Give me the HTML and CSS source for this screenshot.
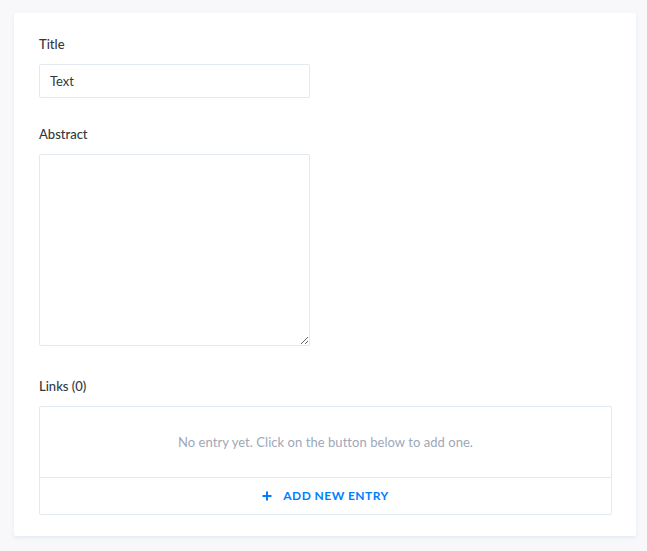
FILE: index.html
```html
<!DOCTYPE html>
<html>
<head>
<meta charset="utf-8">
<link rel="stylesheet" href="styles.css">
</head>
<body>
<div class="card">
  <div class="field">
    <label class="label">Title</label>
    <input class="input" type="text" value="Text">
  </div>
  <div class="field field-abstract">
    <label class="label">Abstract</label>
    <textarea class="textarea"></textarea>
  </div>
  <div class="field field-links">
    <label class="label">Links (0)</label>
    <div class="list">
      <div class="empty">No entry yet. Click on the button below to add one.</div>
      <button class="add">
        <svg class="plus" width="10" height="10" viewBox="0 0 10 10"><path d="M5 0.5V9.5M0.5 5H9.5" stroke="#007eff" stroke-width="2"/></svg>
        <span>ADD NEW ENTRY</span>
      </button>
    </div>
  </div>
</div>
</body>
</html>
```
FILE: styles.css
```css
html, body {
  margin: 0;
  padding: 0;
}
body {
  background: #f8f8fa;
  font-family: Lato, "Liberation Sans", sans-serif;
  font-size: 13px;
  color: #333740;
  padding: 13px 11px 16px 14px;
}
.card {
  background: #fff;
  border-radius: 2px;
  box-shadow: 0 2px 4px #e3e9f3;
  padding: 23px 24px 21px 25px;
  width: 573px;
}
.field {
  display: flex;
  flex-direction: column;
  align-items: flex-start;
}
.field-abstract {
  margin-top: 28px;
}
.field-links {
  margin-top: 32px;
  align-items: stretch;
}
.label {
  font-weight: 500;
  line-height: 16px;
  margin-bottom: 12px;
  color: #333740;
}
.input {
  box-sizing: border-box;
  width: 271px;
  height: 34px;
  border: 1px solid #e3e9f3;
  border-radius: 2px;
  padding: 0 10px;
  font-family: Lato, "Liberation Sans", sans-serif;
  font-size: 13px;
  color: #333740;
  margin: 0;
  outline: none;
}
.textarea {
  box-sizing: border-box;
  width: 271px;
  height: 192px;
  border: 1px solid #e3e9f3;
  border-radius: 2px;
  margin: 0;
  padding: 10px;
  font-family: Lato, "Liberation Sans", sans-serif;
  font-size: 13px;
  display: block;
  outline: none;
}
.list {
  border: 1px solid #e3e9f3;
  border-radius: 2px;
  display: flex;
  flex-direction: column;
}
.empty {
  height: 70px;
  display: flex;
  align-items: center;
  justify-content: center;
  color: #9ea7b8;
  font-size: 13px;
  letter-spacing: 0.05px;
  border-bottom: 1px solid #e3e9f3;
}
.add {
  height: 36px;
  border: 0;
  background: transparent;
  display: flex;
  align-items: center;
  justify-content: center;
  gap: 11px;
  color: #007eff;
  font-family: Lato, "Liberation Sans", sans-serif;
  font-weight: 700;
  font-size: 12px;
  letter-spacing: 0.45px;
  padding: 0 0 1px;
  cursor: pointer;
}
.plus {
  display: block;
}
```
